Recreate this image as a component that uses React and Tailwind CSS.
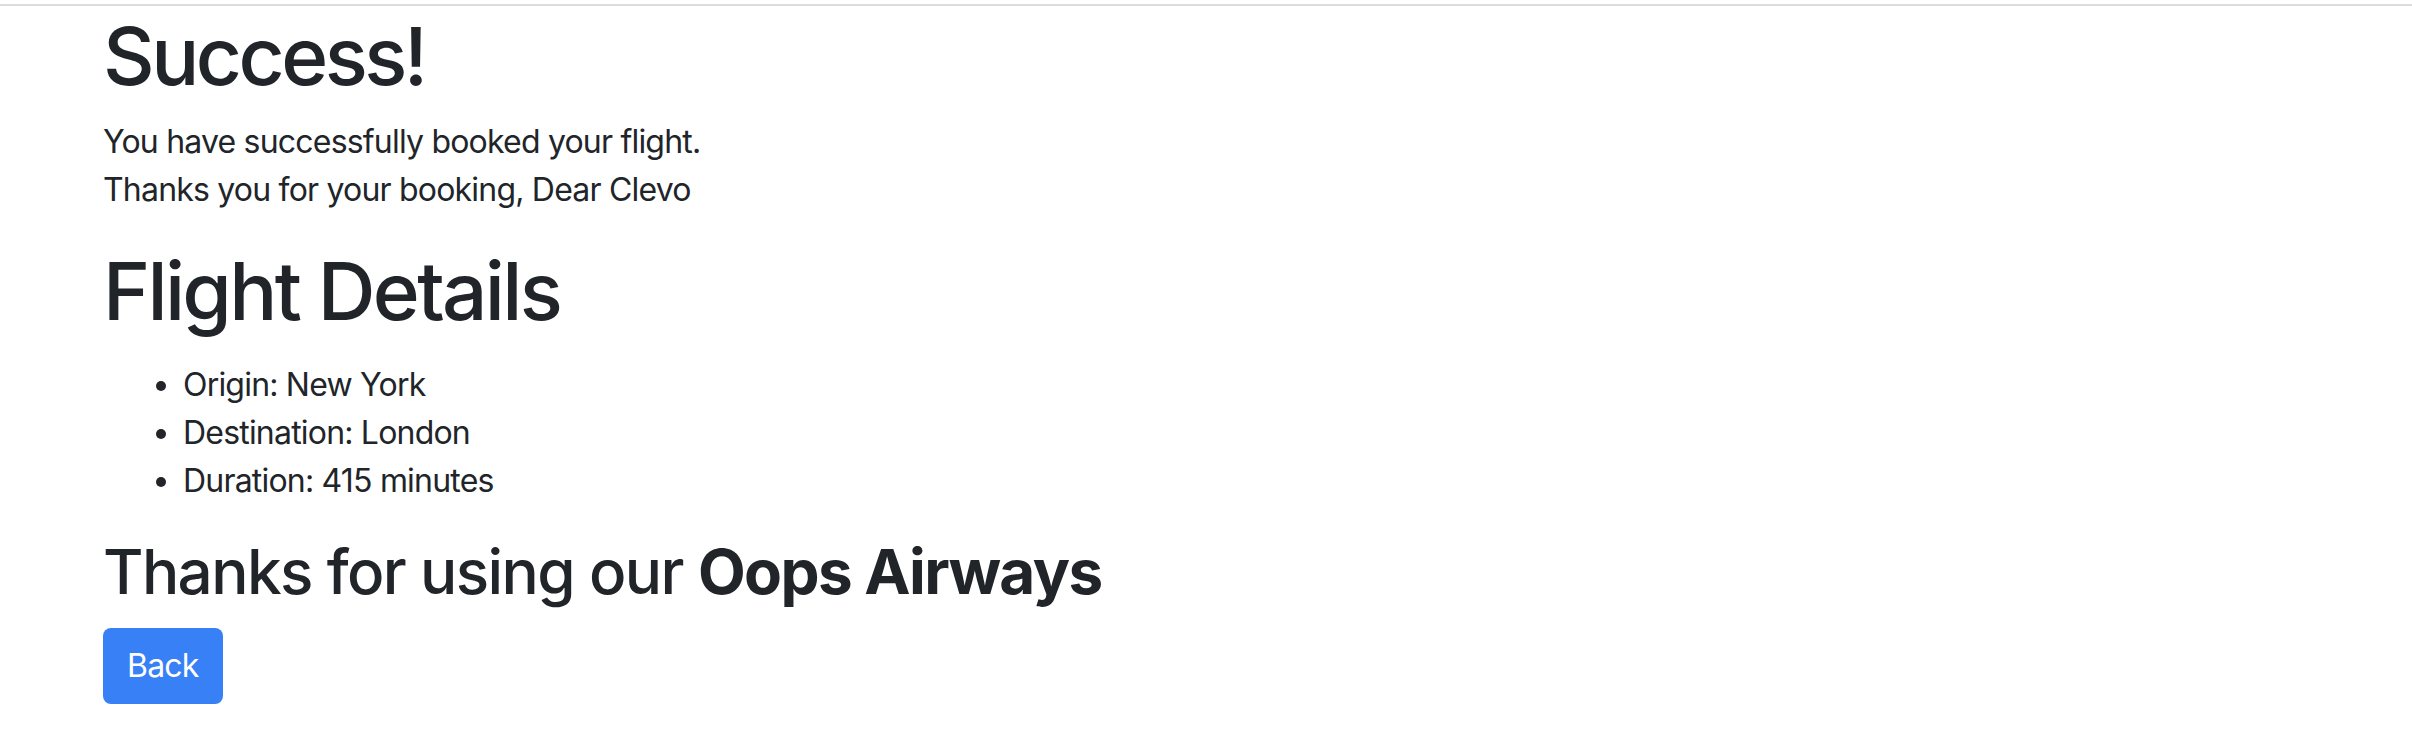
import React from "react";

const App = () => {
  return (
    <div className="min-h-screen bg-white pt-[4px] text-[#212529] font-['Inter','Noto_Sans',sans-serif]">
      <div className="border-t-2 border-[#dcdcdc]"></div>

      <div className="px-[103px]">
        <h1 className="text-[80px] leading-[96px] font-medium tracking-[-3.5px] mt-[2px]">Success!</h1>

        <p className="text-[32px] leading-[48px] tracking-[-0.8px] mt-[14px]">
          You have successfully booked your flight.
          <br />
          Thanks you for your booking, Dear Clevo
        </p>

        <h1 className="text-[80px] leading-[96px] font-medium tracking-[-2.7px] mt-[29px]">Flight Details</h1>

        <ul className="list-disc pl-[80px] text-[32px] leading-[48px] tracking-[-0.8px] mt-[22px]">
          <li>Origin: New York</li>
          <li>Destination: London</li>
          <li>Duration: 415 minutes</li>
        </ul>

        <h2 className="text-[62px] leading-[74px] font-medium tracking-[-1.6px] mt-[30px]">
          Thanks for using our <b className="font-bold">Oops Airways</b>
        </h2>

        <button
          type="button"
          className="mt-[19px] h-[76px] px-[24px] rounded-[8px] bg-[#3880f6] text-white text-[32px] leading-[48px] tracking-[-0.8px]"
        >
          Back
        </button>
      </div>
    </div>
  );
};

export default App;
